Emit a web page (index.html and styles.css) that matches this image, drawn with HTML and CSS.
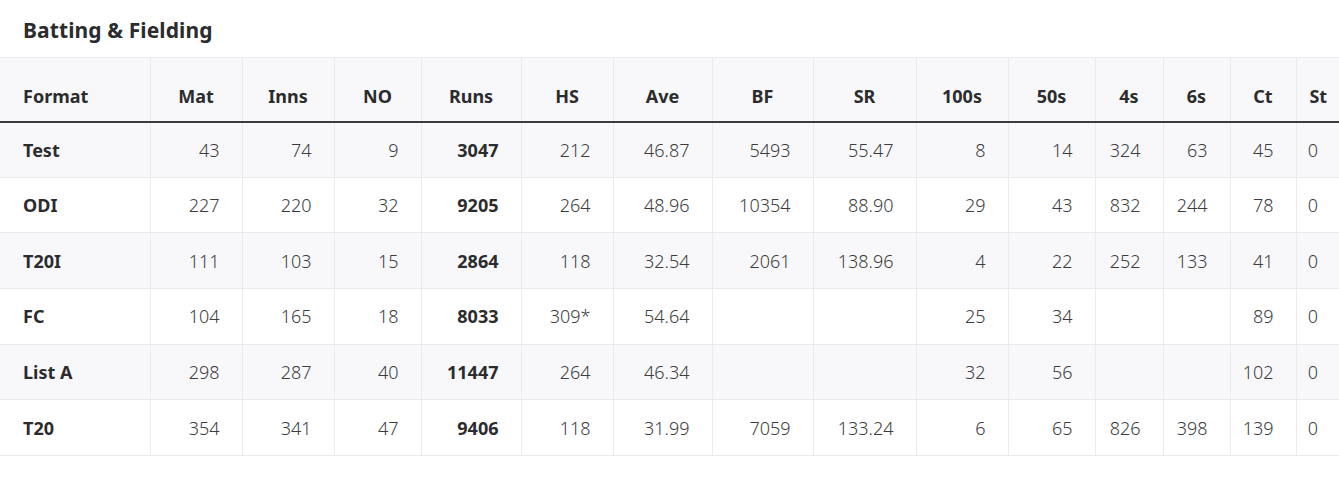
FILE: index.html
```html
<!DOCTYPE html>
<html lang="en">
<head>
<meta charset="utf-8">
<title>Batting &amp; Fielding</title>
<link rel="stylesheet" href="styles.css">
</head>
<body>
<section class="stats">
  <h2 class="stats-title">Batting &amp; Fielding</h2>
  <div class="table-wrap">
    <table class="stats-table">
      <colgroup>
        <col class="c-format"><col class="c-mat"><col class="c-inns"><col class="c-no"><col class="c-runs"><col class="c-hs"><col class="c-ave"><col class="c-bf"><col class="c-sr"><col class="c-100"><col class="c-50"><col class="c-4s"><col class="c-6s"><col class="c-ct"><col class="c-st">
      </colgroup>
      <thead>
        <tr>
          <th class="left">Format</th><th>Mat</th><th>Inns</th><th>NO</th><th>Runs</th><th>HS</th><th>Ave</th><th>BF</th><th>SR</th><th>100s</th><th>50s</th><th>4s</th><th>6s</th><th>Ct</th><th>St</th>
        </tr>
      </thead>
      <tbody>
        <tr class="alt">
          <td class="fmt">Test</td><td>43</td><td>74</td><td>9</td><td class="bold">3047</td><td>212</td><td>46.87</td><td>5493</td><td>55.47</td><td>8</td><td>14</td><td>324</td><td>63</td><td>45</td><td>0</td>
        </tr>
        <tr>
          <td class="fmt">ODI</td><td>227</td><td>220</td><td>32</td><td class="bold">9205</td><td>264</td><td>48.96</td><td>10354</td><td>88.90</td><td>29</td><td>43</td><td>832</td><td>244</td><td>78</td><td>0</td>
        </tr>
        <tr class="alt">
          <td class="fmt">T20I</td><td>111</td><td>103</td><td>15</td><td class="bold">2864</td><td>118</td><td>32.54</td><td>2061</td><td>138.96</td><td>4</td><td>22</td><td>252</td><td>133</td><td>41</td><td>0</td>
        </tr>
        <tr>
          <td class="fmt">FC</td><td>104</td><td>165</td><td>18</td><td class="bold">8033</td><td>309*</td><td>54.64</td><td></td><td></td><td>25</td><td>34</td><td></td><td></td><td>89</td><td>0</td>
        </tr>
        <tr class="alt">
          <td class="fmt">List A</td><td>298</td><td>287</td><td>40</td><td class="bold">11447</td><td>264</td><td>46.34</td><td></td><td></td><td>32</td><td>56</td><td></td><td></td><td>102</td><td>0</td>
        </tr>
        <tr>
          <td class="fmt">T20</td><td>354</td><td>341</td><td>47</td><td class="bold">9406</td><td>118</td><td>31.99</td><td>7059</td><td>133.24</td><td>6</td><td>65</td><td>826</td><td>398</td><td>139</td><td>0</td>
        </tr>
      </tbody>
    </table>
  </div>
</section>
</body>
</html>
```

FILE: styles.css
```css
html, body {
  margin: 0;
  padding: 0;
  background: #ffffff;
}

body {
  font-family: "Noto Sans", "Liberation Sans", sans-serif;
  color: #2b2c2d;
}

.stats {
  width: 1339px;
  overflow: hidden;
}

.stats-title {
  margin: 0;
  height: 57px;
  box-sizing: border-box;
  padding: 16px 0 0 23px;
  font-size: 21px;
  line-height: 28px;
  font-weight: 700;
  letter-spacing: 0.1px;
  color: #2b2c2d;
}

.table-wrap {
  overflow: hidden;
}

.stats-table {
  width: 1340px;
  table-layout: fixed;
  border-collapse: collapse;
  font-size: 18px;
}

.c-format { width: 150px; }
.c-mat { width: 92px; }
.c-inns { width: 92px; }
.c-no { width: 87px; }
.c-runs { width: 100px; }
.c-hs { width: 92px; }
.c-ave { width: 99px; }
.c-bf { width: 101px; }
.c-sr { width: 103px; }
.c-100 { width: 92px; }
.c-50 { width: 87px; }
.c-4s { width: 68px; }
.c-6s { width: 67px; }
.c-ct { width: 66px; }
.c-st { width: 44px; }

.stats-table thead tr {
  background: #f8f8fa;
  border-top: 1px solid #ebebeb;
  border-bottom: 2px solid #3a3b3c;
}

.stats-table th {
  height: 64px;
  padding: 13px 0 0;
  box-sizing: border-box;
  text-align: center;
  font-weight: 700;
  font-size: 18px;
  color: #2b2c2d;
  border-left: 1px solid #ebebeb;
  white-space: nowrap;
}

.stats-table th.left {
  text-align: left;
  padding-left: 23px;
  border-left: none;
}

.stats-table tbody tr {
  border-bottom: 1px solid #ebebeb;
}

.stats-table tbody tr.alt {
  background: #f8f8fa;
}

.stats-table td {
  height: 55.67px;
  padding: 0 22px 0 0;
  box-sizing: border-box;
  text-align: right;
  font-weight: 300;
  color: #3c3d3e;
  border-left: 1px solid #ebebeb;
  white-space: nowrap;
}

.stats-table td.fmt {
  text-align: left;
  padding-left: 23px;
  padding-right: 0;
  font-weight: 700;
  color: #2b2c2d;
  border-left: none;
}

.stats-table td.bold {
  font-weight: 700;
  color: #2b2c2d;
}
```
